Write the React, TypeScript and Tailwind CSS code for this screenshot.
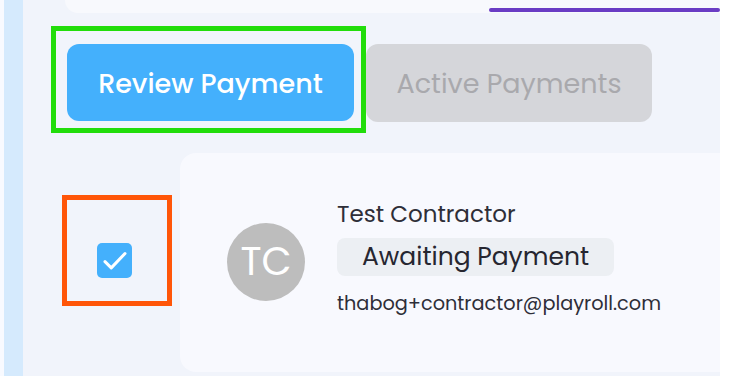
import React from 'react';

const font = { fontFamily: 'Poppins, "Open Sans", "Noto Sans", sans-serif' };

function App() {
    return (
        <div className="w-[730px] h-[383px] bg-white flex overflow-hidden" style={font}>
            <div className="w-[4px] h-[376px] bg-[#f8faff]" />
            <div className="w-[19px] h-[376px] bg-[#d5eafd]" />

            <div className="w-[697px] h-[376px] bg-[#f1f4fb] flex flex-col">
                {/* top card edge */}
                <div className="ml-[42px] h-[13px] bg-[#f8f9fd] rounded-bl-2xl flex items-end">
                    <div className="ml-[424px] flex-1 h-[4px] mb-[1px] bg-[#6a3cc4] rounded-full" />
                </div>

                {/* tabs */}
                <div className="flex items-start mt-[13px] ml-[28px]">
                    <div className="border-[5px] border-[#22dd0b] pt-[13px] pl-[11px] pr-[7px] pb-[7px]">
                        <button className="w-[287px] h-[77px] rounded-xl bg-[#44b0fc] text-white text-[27px] font-medium pt-[3px]">
                            Review Payment
                        </button>
                    </div>
                    <button className="mt-[18px] w-[286px] h-[78px] rounded-xl bg-[#d5d6da] text-[#a9a9ad] text-[27px] pt-[3px]">
                        Active Payments
                    </button>
                </div>

                {/* contractor row */}
                <div className="flex mt-[20px]">
                    <div className="ml-[39px] mt-[42px] w-[110px] h-[111px] border-[5px] border-[#ff5508] pl-[30px] pt-[43px]">
                        <div className="w-[35px] h-[35px] rounded-[5px] bg-[#44b0fc] flex items-center justify-center">
                            <svg className="w-[30px] h-[30px] shrink-0" viewBox="0 0 24 24" fill="none" stroke="white" strokeWidth="2.4" strokeLinecap="round" strokeLinejoin="round">
                                <path d="M4 12.5l5 5L20 6" />
                            </svg>
                        </div>
                    </div>

                    <div className="ml-[8px] flex-1 h-[219px] bg-[#f8f9fe] rounded-l-2xl flex items-start pt-[47px] pl-[47px]">
                        <div className="mt-[23px] w-[78px] h-[78px] rounded-full bg-[#bdbdbd] text-white text-[39px] flex items-center justify-center">
                            TC
                        </div>
                        <div className="ml-[32px] flex flex-col">
                            <div className="text-[23px] leading-[28px] text-[#2e2e38]">Test Contractor</div>
                            <div className="mt-[10px] w-[277px] h-[38px] rounded-lg bg-[#eceff3] pl-[25px] flex items-center text-[25px] text-[#262630]">
                                Awaiting Payment
                            </div>
                            <div className="mt-[16px] text-[19.3px] leading-[24px] text-[#2e2e38]">thabog+contractor@playroll.com</div>
                        </div>
                    </div>
                </div>
            </div>
        </div>
    );
}

export default App;
